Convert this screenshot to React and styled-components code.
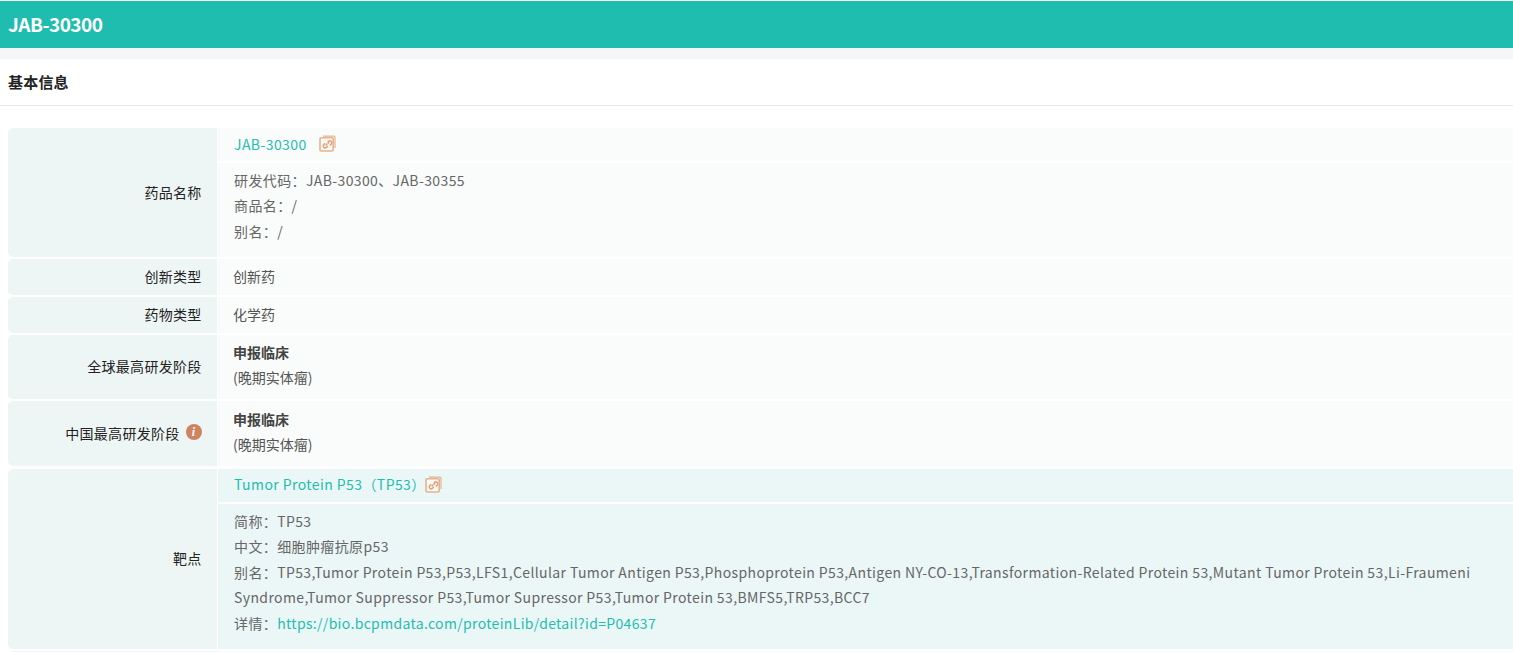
import React from "react";
import styled, { createGlobalStyle } from "styled-components";

const Global = createGlobalStyle`
  html, body { margin: 0; padding: 0; background: #fff; height: 652px; overflow: hidden; }
  body { font-family: "Noto Sans CJK SC", "Noto Sans", sans-serif; }
`;
const Page = styled.div`display: flex; flex-direction: column; height: 652px; overflow: hidden; padding-top: 1px; box-sizing: border-box;`;
const TitleBar = styled.h1`
  margin: 0; height: 47px; flex: none; background: #1fbdaf; color: #fff; font-size: 19px; font-weight: 700; letter-spacing: -.5px;
  line-height: 46px; padding-left: 8px;
`;
const Gap = styled.div`height: 11px; flex: none; background: #f5f6f8;`;
const SectionTitle = styled.h2`
  margin: 0; height: 46px; flex: none; border-bottom: 1px solid #e8e8e8; color: #222; font-size: 15px; font-weight: 700; letter-spacing: .2px;
  line-height: 46px; padding-left: 8px;
`;
const Table = styled.div`display: flex; flex-direction: column; gap: 2px; margin: 22px 0 0 8px;`;
const Row = styled.div`
  display: grid; grid-template-columns: 209px 1fr; column-gap: 1px; flex: none; min-height: ${p => p.$h}px;
  margin-top: ${p => p.$top || 0}px;
`;
const Label = styled.div`
  background: #eef6f5; border-radius: 5px 0 0 5px; display: flex; align-items: center; justify-content: flex-end;
  gap: 6px; padding: 0 15.4px 2px 0; font-size: 14px; letter-spacing: .3px; color: #222; line-height: 20px;
`;
const Value = styled.div`
  display: flex; flex-direction: column; justify-content: center; background: #fafcfb;
  padding: 0 0 ${p => p.$pad}px 15px; font-size: 14px; color: #555; line-height: 25px;
`;
const Stack = styled.div`display: flex; flex-direction: column; gap: 2px;`;
const LinkRow = styled.div`
  height: 33px; display: flex; align-items: center; padding: 0 0 ${p => p.$tint ? 3 : 2}px 16px; box-sizing: border-box; color: #1fbdaf;
  background: ${p => p.$tint ? "#ebf7f7" : "#fafcfb"}; font-size: 14px; letter-spacing: .42px;
`;
const IconWrap = styled.span`display: inline-flex; margin-left: ${p => p.$gap}px;`;
const Detail = styled.div`
  background: ${p => p.$tint ? "#ebf7f7" : "#fafcfb"}; padding: 5px 30px 0 16px; height: ${p => p.$h}px; box-sizing: border-box;
  font-size: 14px; letter-spacing: .38px; line-height: 25.4px; color: #666;
`;
const Anchor = styled.a`color: #1fbdaf; text-decoration: none; letter-spacing: .33px;`;
const Strong = styled.strong`font-weight: 700; color: #444; display: block;`;
const Info = styled.span`
  width: 16px; height: 16px; border-radius: 50%; background: #cd8461; color: #fff; font: italic 700 12px/16px "Liberation Serif", serif;
  text-align: center; flex: none; margin-top: -1px;
`;

const CopyLink = () => (
  <svg width="17" height="17" viewBox="0 0 17 17" fill="none" stroke="#e3b38f" strokeWidth="1.2">
    <path d="M4 1.2h11a1 1 0 0 1 1 1V13" />
    <rect x="1" y="2.8" width="13.2" height="13.2" rx="1.2" fill="#fdf8f3" strokeWidth="1.6" />
    <path d="M6.6 10.4l1.8-1.8M6.2 8.2l-1.4 1.4a1.9 1.9 0 0 0 2.7 2.7l1.4-1.4M9 11M8.8 7.2l1.4 1.4M8.6 7.4l.9-.9a1.9 1.9 0 0 1 2.7 2.7l-1.4 1.4" stroke="#dd9f74" strokeWidth="1.4" />
  </svg>
);

export default function App() {
  return (
    <>
      <Global />
      <Page>
        <TitleBar>JAB-30300</TitleBar>
        <Gap />
        <SectionTitle>基本信息</SectionTitle>
        <Table>
          <Row $h={129}>
            <Label>药品名称</Label>
            <Stack>
              <LinkRow>JAB-30300<IconWrap $gap={12}><CopyLink /></IconWrap></LinkRow>
              <Detail $h={94}>
                <div>研发代码：JAB-30300、JAB-30355</div>
                <div>商品名：/</div>
                <div>别名：/</div>
              </Detail>
            </Stack>
          </Row>
          <Row $h={36}><Label>创新类型</Label><Value $pad={1}>创新药</Value></Row>
          <Row $h={36}><Label>药物类型</Label><Value $pad={1}>化学药</Value></Row>
          <Row $h={64}><Label>全球最高研发阶段</Label><Value $pad={5}><Strong>申报临床</Strong><div>(晚期实体瘤)</div></Value></Row>
          <Row $h={65}><Label>中国最高研发阶段<Info>i</Info></Label><Value $pad={3}><Strong>申报临床</Strong><div>(晚期实体瘤)</div></Value></Row>
          <Row $h={180} $top={1}>
            <Label>靶点</Label>
            <Stack>
              <LinkRow $tint>Tumor Protein P53（TP53）<IconWrap $gap={-1}><CopyLink /></IconWrap></LinkRow>
              <Detail $tint $h={145}>
                <div>简称：TP53</div>
                <div>中文：细胞肿瘤抗原p53</div>
                <div>别名：TP53,Tumor Protein P53,P53,LFS1,Cellular Tumor Antigen P53,Phosphoprotein P53,Antigen NY-CO-13,Transformation-Related Protein 53,Mutant Tumor Protein 53,Li-Fraumeni Syndrome,Tumor Suppressor P53,Tumor Supressor P53,Tumor Protein 53,BMFS5,TRP53,BCC7</div>
                <div>详情：<Anchor href="#">https://bio.bcpmdata.com/proteinLib/detail?id=P04637</Anchor></div>
              </Detail>
            </Stack>
          </Row>
          <Row $h={40}><Label /><Value $pad={0} /></Row>
        </Table>
      </Page>
    </>
  );
}
